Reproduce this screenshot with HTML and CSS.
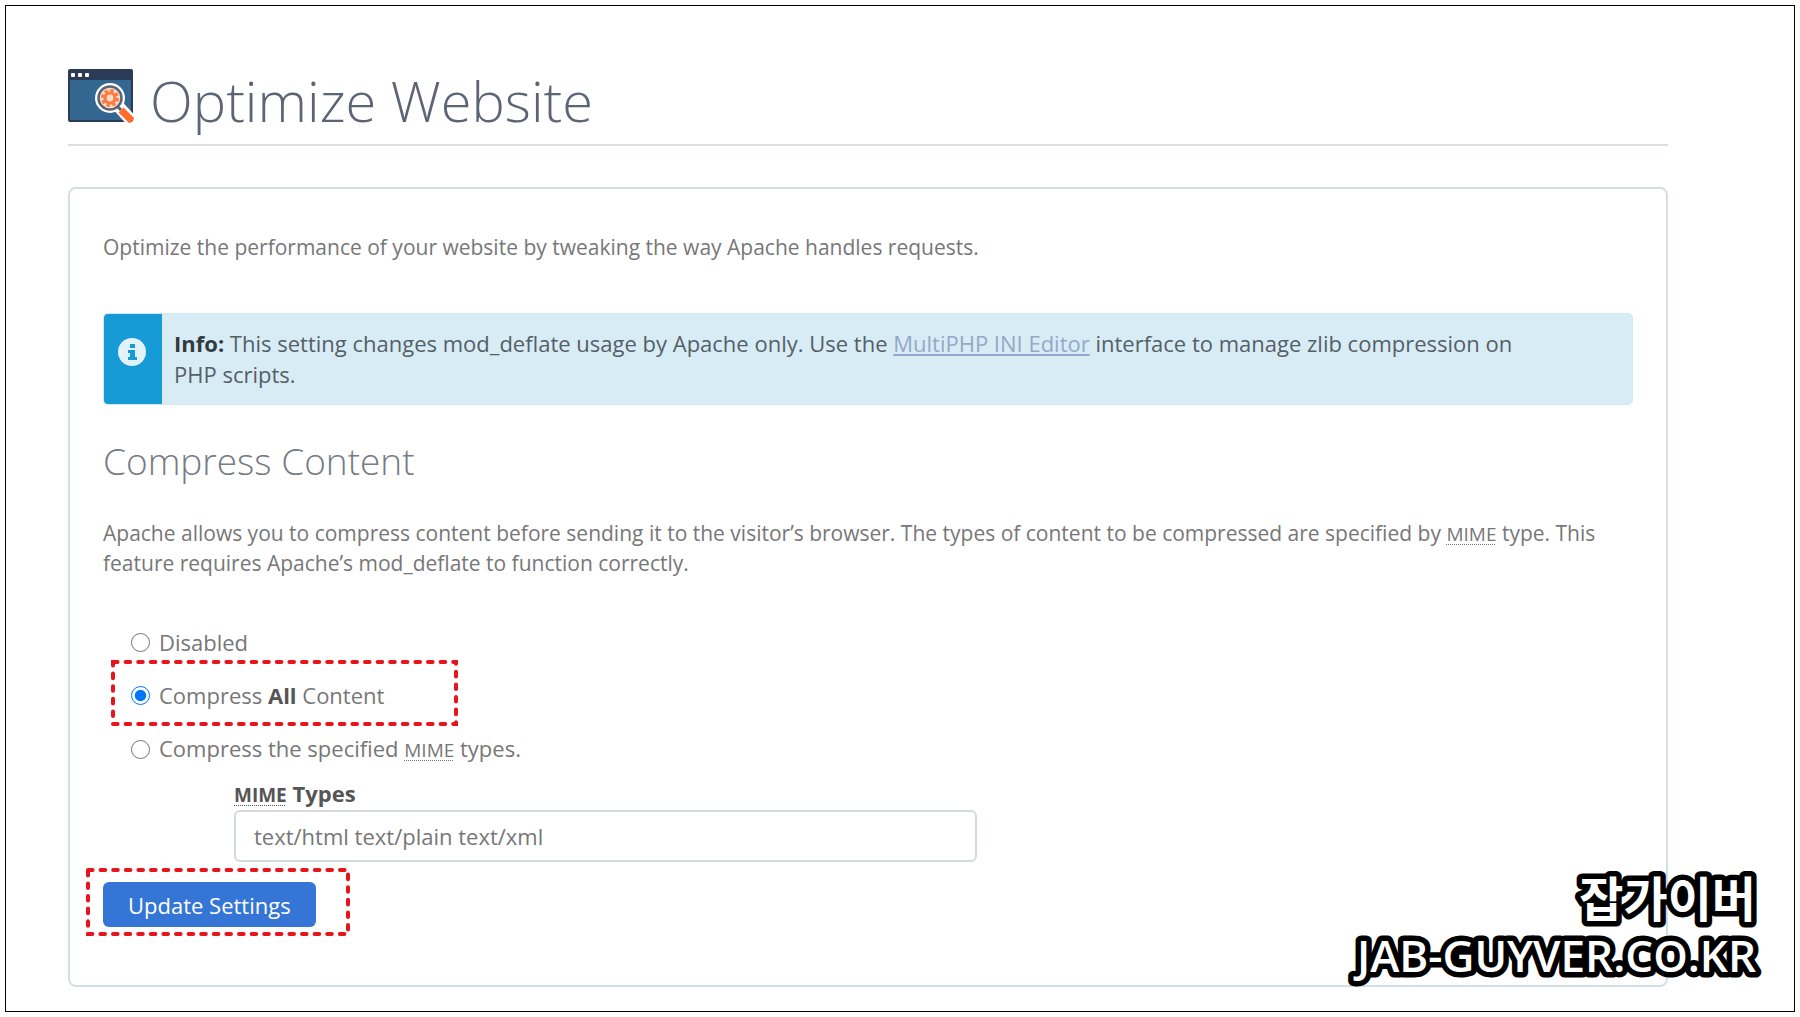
FILE: index.html
```html
<!DOCTYPE html>
<html lang="en">
<head>
    <meta charset="UTF-8">
    <meta name="viewport" content="width=device-width, initial-scale=1.0">
    <title>Optimize Website</title>
    <link rel="stylesheet" href="styles.css">
</head>
<body>
    <div class="frame">
        <main class="content">
            <header class="page-header">
                <svg class="page-icon" viewBox="0 0 66 54" aria-hidden="true">
                    <rect x="0" y="0" width="65" height="53" rx="2" fill="#2b3a57"/>
                    <rect x="2" y="11" width="61" height="40" rx="1" fill="#336791"/>
                    <rect x="3" y="4" width="4" height="4" rx="1" fill="#fff"/>
                    <rect x="10" y="4" width="4" height="4" rx="1" fill="#fff"/>
                    <rect x="17" y="4" width="4" height="4" rx="1" fill="#fff"/>
                    <path d="M51 38 L63 51" stroke="#fff" stroke-width="12"/>
                    <circle cx="42" cy="29" r="15" fill="#fff"/>
                    <circle cx="42" cy="29" r="11.5" fill="#fbdccb" stroke="#5a6478" stroke-width="2.5"/>
                    <circle cx="42" cy="29" r="7.5" fill="none" stroke="#ff7a40" stroke-width="3" stroke-dasharray="3.4 2.5"/>
                    <circle cx="42" cy="29" r="5" fill="none" stroke="#ff7a40" stroke-width="3.2"/>
                    <path d="M49 37 L53 41" stroke="#5a6478" stroke-width="3"/>
                    <path d="M53 41 L64 52" stroke="#ff6c2c" stroke-width="7"/>
                </svg>
                <h1>Optimize Website</h1>
            </header>

            <section class="panel">
                <p class="intro">Optimize the performance of your website by tweaking the way Apache handles requests.</p>

                <div class="alert">
                    <div class="alert-icon">
                        <svg viewBox="0 0 28 28" aria-hidden="true">
                            <circle cx="14" cy="14" r="14" fill="#e2f2fa"/>
                            <path d="M12 6h5v4h-5z M10 12h7v7h2v3h-9v-3h2v-4h-2z" fill="#179bd7"/>
                        </svg>
                    </div>
                    <p class="alert-text"><strong>Info:</strong> This setting changes mod_deflate usage by Apache only. Use the <a href="#">MultiPHP INI Editor</a> interface to manage zlib compression on PHP scripts.</p>
                </div>

                <h2>Compress Content</h2>
                <p class="description">Apache allows you to compress content before sending it to the visitor’s browser. The types of content to be compressed are specified by <abbr>MIME</abbr> type. This feature requires Apache’s mod_deflate to function correctly.</p>

                <form>
                    <div class="options">
                        <div class="option">
                            <input type="radio" name="compress" id="disabled">
                            <label for="disabled">Disabled</label>
                        </div>
                        <div class="option">
                            <input type="radio" name="compress" id="all" checked>
                            <label for="all">Compress <strong>All</strong> Content</label>
                            <svg class="highlight highlight-option" aria-hidden="true"><rect width="100%" height="100%"/></svg>
                        </div>
                        <div class="option">
                            <input type="radio" name="compress" id="specified">
                            <label for="specified">Compress the specified <abbr>MIME</abbr> types.</label>
                        </div>
                    </div>
                    <div class="mime">
                        <label for="mimeTypes"><abbr>MIME</abbr> Types</label>
                        <input type="text" id="mimeTypes" value="text/html text/plain text/xml">
                    </div>
                    <div class="actions">
                        <button type="submit">Update Settings</button>
                        <svg class="highlight highlight-button" aria-hidden="true"><rect width="100%" height="100%"/></svg>
                    </div>
                </form>
            </section>
        </main>

        <svg class="watermark">
            <text class="watermark-name" x="410" y="52" lang="ko">잡가이버</text>
            <text class="watermark-site" x="410" y="107">JAB-GUYVER.CO.KR</text>
        </svg>
    </div>
</body>
</html>
```
FILE: styles.css
```css
* {
    box-sizing: border-box;
}
body {
    margin: 0;
    padding: 5px;
    background-color: #fff;
    font-family: "Open Sans", "Noto Sans CJK KR", sans-serif;
    font-size: 21px;
    line-height: 30px;
    color: #777;
}
h1, h2, p {
    margin: 0;
}
.frame {
    position: relative;
    min-height: calc(100vh - 10px);
    border: 1px solid #000;
    padding: 58px 126px 23px 62px;
}
.page-header {
    display: flex;
    gap: 16px;
    height: 82px;
    padding-top: 5px;
    border-bottom: 2px solid #dcdfe2;
}
.page-icon {
    flex: none;
    width: 66px;
    height: 54px;
}
h1 {
    font-size: 56px;
    font-weight: 300;
    line-height: 62px;
    color: #5d6475;
}
.panel {
    margin-top: 41px;
    padding: 43px 33px 58px;
    border: 2px solid #d3dfe6;
    border-radius: 8px;
}
.alert {
    display: flex;
    margin-top: 51px;
    border: 1px solid #cfe9f1;
    border-radius: 5px;
    background-color: #d8ecf6;
    overflow: hidden;
}
.alert-icon {
    flex: none;
    width: 58px;
    padding: 24px 14px;
    background-color: #179bd7;
}
.alert-icon svg {
    display: block;
    width: 28px;
    height: 28px;
}
.alert-text {
    padding: 14px 88px 14px 12px;
    font-size: 22px;
    line-height: 31px;
    color: #555f66;
}
.alert-text strong {
    color: #333a40;
}
.alert-text a {
    color: #93a9c9;
}
h2 {
    margin-top: 30px;
    font-size: 37px;
    font-weight: 300;
    line-height: 52px;
    color: #777b84;
}
.description {
    margin-top: 32px;
    line-height: 29px;
}
abbr {
    font-size: 19px;
    text-decoration: underline dotted 1px;
    text-underline-offset: 3px;
}
.options {
    display: flex;
    flex-direction: column;
    gap: 23px;
    margin-top: 49px;
    padding-left: 28px;
    font-size: 22px;
}
.option {
    position: relative;
    display: flex;
    align-items: center;
    gap: 9px;
}
.option input {
    width: 19px;
    height: 19px;
    margin: 0;
}
.option strong {
    color: #555;
}
.highlight {
    position: absolute;
    overflow: visible;
}
.highlight rect {
    fill: none;
    stroke: #e8141c;
    stroke-width: 4;
    stroke-linecap: round;
    stroke-dasharray: 4.6 8;
}
.highlight-option {
    left: -18px;
    top: -18px;
    width: 343px;
    height: 62px;
}
.mime {
    display: flex;
    flex-direction: column;
    width: calc(50% - 22px);
    margin: 13px 0 0 131px;
    font-size: 22px;
}
.mime label {
    font-weight: 700;
    color: #555;
}
.mime input {
    height: 52px;
    padding: 0 18px;
    border: 2px solid #d5dade;
    border-radius: 6px;
    font: inherit;
    color: #777;
}
.actions {
    position: relative;
    margin-top: 20px;
}
.actions button {
    display: block;
    height: 45px;
    padding: 0 25px;
    border: none;
    border-radius: 6px;
    background-color: #3575d6;
    font: inherit;
    font-size: 22px;
    color: #fff;
}
.highlight-button {
    left: -15px;
    top: -12px;
    width: 260px;
    height: 64px;
}
.watermark {
    position: absolute;
    right: 28px;
    bottom: 26px;
    width: 420px;
    height: 120px;
    overflow: visible;
}
.watermark text {
    fill: #fff;
    stroke: #000;
    stroke-width: 11;
    stroke-linejoin: round;
    paint-order: stroke;
    text-anchor: end;
}
.watermark-name {
    font-family: "Noto Sans CJK KR", sans-serif;
    font-size: 48px;
    font-weight: 700;
}
.watermark-site {
    font-size: 44px;
    font-weight: 600;
}
```
